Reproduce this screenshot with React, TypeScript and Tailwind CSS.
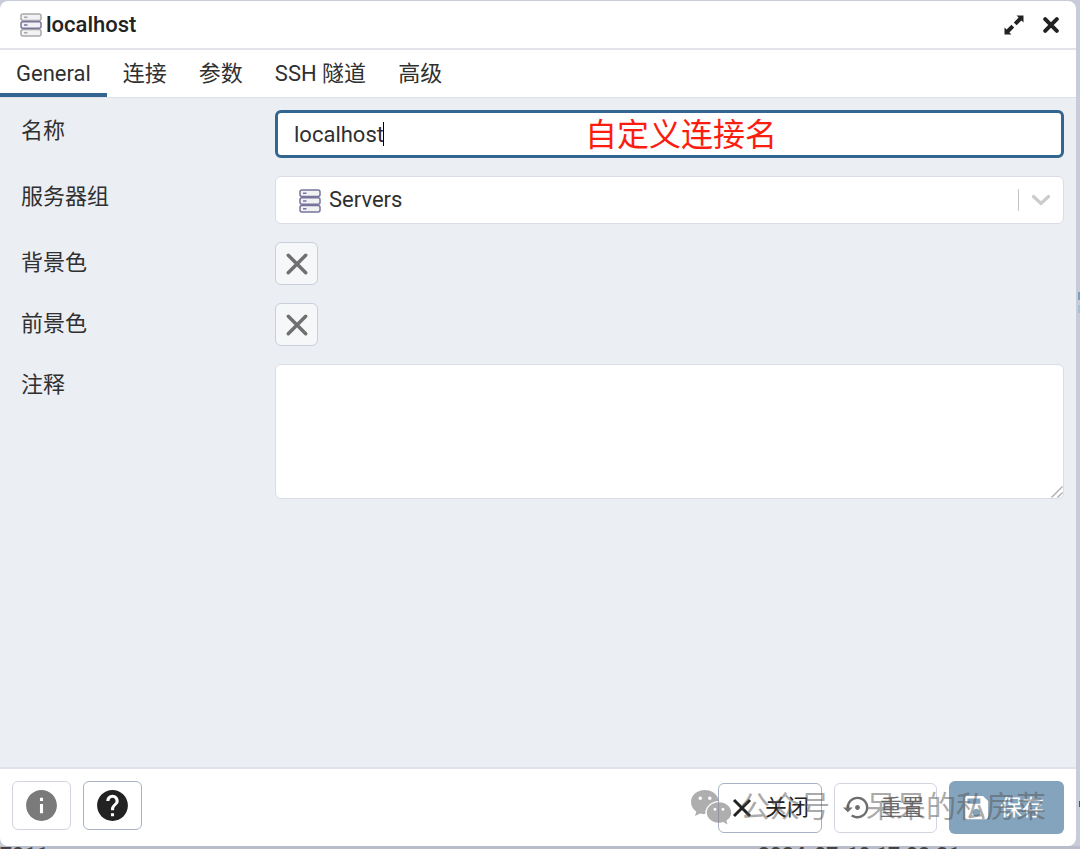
import { useState } from 'react';
import {
    MdHelp,
    MdInfo,
    MdSave,
    MdSettingsBackupRestore,
} from 'react-icons/md';

const tabs = ['General', '连接', '参数', 'SSH 隧道', '高级'];

const ServerIcon = ({ outer = '#76749b' }: { outer?: string }) => (
    <svg width="22" height="24" viewBox="0 0 22 24" fill="#f2f2f4" strokeWidth="1.5" aria-hidden="true">
        <rect x="1" y="1" width="20" height="6.6" rx="2" stroke={outer} />
        <rect x="1" y="16.4" width="20" height="6.6" rx="2" stroke={outer} />
        <rect x="1" y="8.7" width="20" height="6.6" rx="2" stroke="#76749b" />
        <path d="M4 4.3h3.5M4 19.7h3.5" stroke={outer} />
        <path d="M4 12h3.5" stroke="#76749b" />
    </svg>
);

const ExpandIcon = () => (
    <svg width="20" height="20" viewBox="0 0 20 20" fill="#222" aria-hidden="true">
        <path d="M12.5 0.5H19.5V7.5L17.4 5.4L12.6 10.2L9.8 7.4L14.6 2.6Z" />
        <path d="M7.5 19.5H0.5V12.5L2.6 14.6L7.4 9.8L10.2 12.6L5.4 17.4Z" />
    </svg>
);

const Cross = ({ size, width, cap = 'round' }: { size: number; width: number; cap?: 'round' | 'butt' }) => (
    <svg width={size} height={size} viewBox="0 0 22 22" fill="none" stroke="currentColor" strokeWidth={width} strokeLinecap={cap} aria-hidden="true">
        <path d="M3 3L19 19M19 3L3 19" />
    </svg>
);

const WechatIcon = () => (
    <svg width="42" height="36" viewBox="0 0 42 36" fill="#888" fillOpacity="0.68" fillRule="evenodd" aria-hidden="true">
        <path d="M15 1C7 1 1 6.3 1 13c0 3.9 2 7.3 5.3 9.5L5 27l5-2.6c1.7.5 3.4.7 5.2.7C15 17.8 21.2 12.1 29 12.1C27.8 5.5 22 1 15 1ZM10.3 7.5a1.8 1.8 0 1 1 0 3.6 1.8 1.8 0 0 1 0-3.6ZM19.8 7.5a1.8 1.8 0 1 1 0 3.6 1.8 1.8 0 0 1 0-3.6Z" />
        <path d="M29 13.2c-6.7 0-12.2 4.6-12.2 10.3S22.3 33.8 29 33.8c1.5 0 3-.2 4.3-.7l4.2 2.3-1.2-3.7c3-1.9 4.9-4.9 4.9-8.2 0-5.7-5.5-10.3-12.2-10.3ZM25 18.7a1.5 1.5 0 1 1 0 3 1.5 1.5 0 0 1 0-3ZM33 18.7a1.5 1.5 0 1 1 0 3 1.5 1.5 0 0 1 0-3Z" />
    </svg>
);

const Row = ({
    label,
    id,
    children,
}: {
    label: string;
    id: string;
    children: React.ReactNode;
}) => (
    <div className="flex items-start">
        <label htmlFor={id} className="h-[42px] w-[254px] shrink-0 leading-[42px]">{label}</label>
        <div className="relative flex min-w-0 flex-1">{children}</div>
    </div>
);

const ColorButton = ({ id }: { id: string }) => (
    <button id={id} type="button" className="flex h-[43px] w-[43px] items-center justify-center rounded-md border border-[#c8cedb] bg-[#f6f7f9] text-[#707070]">
        <Cross size={24} width={3.2} />
    </button>
);

const App = () => {
    const [active, setActive] = useState('General');
    const [name, setName] = useState('localhost');
    const [comment, setComment] = useState('');

    return (
        <div className="relative flex min-h-screen flex-col overflow-hidden bg-[#c8ccd8] pt-px text-[22px] text-[#303030] font-['Roboto','Noto_Sans_CJK_SC',sans-serif]">
            <div className="absolute right-0 top-[292px] h-2 w-[2px] bg-[#7f9dc4]" />
            <div className="absolute right-0 top-[305px] h-2 w-[2px] bg-[#a5bfdc]" />
            <div className="absolute right-0 top-[801px] h-[6px] w-px bg-[#555]" />

            <main className="mr-1 flex flex-1 flex-col overflow-hidden rounded-lg bg-white">
                <header className="flex h-[49px] items-center border-b-2 border-[#e2e4ea] pl-5 pr-[17px]">
                    <ServerIcon outer="#a9a9ad" />
                    <h1 className="ml-1 flex-1 font-medium leading-7 text-[#222]">localhost</h1>
                    <button type="button" aria-label="最大化" className="mr-[19px]">
                        <ExpandIcon />
                    </button>
                    <button type="button" aria-label="关闭对话框" className="text-[#222]">
                        <Cross size={16} width={5.4} />
                    </button>
                </header>

                <nav role="tablist" className="flex h-12 border-b border-[#dfe2e9]">
                    {tabs.map((tab) => (
                        <button
                            key={tab}
                            type="button"
                            role="tab"
                            aria-selected={tab === active}
                            onClick={() => setActive(tab)}
                            className={`border-b-4 px-4 pt-1 ${tab === active ? 'border-[#326690]' : 'border-transparent'}`}
                        >
                            {tab}
                        </button>
                    ))}
                </nav>

                <section className="flex flex-1 flex-col gap-[18px] bg-[#ebeef3] pb-4 pl-[21px] pr-3 pt-3">
                    <Row label="名称" id="name">
                        <input
                            id="name"
                            value={name}
                            onChange={(e) => setName(e.target.value)}
                            className="h-12 w-full rounded-md border-[3px] border-[#326690] bg-white px-4 outline-none"
                        />
                        <span className="absolute left-[108px] top-3 h-6 w-px bg-black" />
                        <span className="absolute left-[310px] top-0 text-[32px] leading-[50px] text-[#fb1e10]">自定义连接名</span>
                    </Row>
                    <Row label="服务器组" id="group">
                        <select id="group" className="h-12 w-full appearance-none rounded-md border border-[#d9dde5] bg-white pb-0.5 pl-[53px] pr-14 outline-none">
                            <option>Servers</option>
                        </select>
                        <span className="pointer-events-none absolute left-6 top-[13px]">
                            <ServerIcon />
                        </span>
                        <span className="pointer-events-none absolute right-[13px] top-[13px] flex h-[22px] items-center gap-3">
                            <span className="h-full w-px bg-[#c4c4c4]" />
                            <svg width="20" height="12" viewBox="0 0 20 12" fill="none" stroke="#ccc" strokeWidth="3.2" strokeLinecap="round" strokeLinejoin="round" aria-hidden="true">
                                <path d="M2.5 2.5L10 9.5L17.5 2.5" />
                            </svg>
                        </span>
                    </Row>
                    <Row label="背景色" id="background">
                        <ColorButton id="background" />
                    </Row>
                    <Row label="前景色" id="foreground">
                        <ColorButton id="foreground" />
                    </Row>
                    <Row label="注释" id="comment">
                        <textarea
                            id="comment"
                            value={comment}
                            onChange={(e) => setComment(e.target.value)}
                            className="h-[135px] w-full resize-none rounded-md border border-[#d9dde5] bg-white px-4 py-2 outline-none"
                        />
                        <svg className="absolute bottom-px right-px" width="12" height="12" viewBox="0 0 12 12" stroke="#aaa" strokeWidth="1.3" aria-hidden="true">
                            <path d="M0.5 11.5L11.5 0.5M6.5 11.5L11.5 6.5" />
                        </svg>
                    </Row>
                </section>

                <footer className="relative flex h-[79px] items-center gap-3 border-t-2 border-[#dfe2e9] px-3">
                    <button type="button" disabled aria-label="信息" className="mb-1 flex h-[49px] w-[59px] items-center justify-center rounded-md border border-[#d0d5df] text-[#7a7a7a]">
                        <MdInfo size={37} />
                    </button>
                    <button type="button" aria-label="帮助" className="mb-1 mr-auto flex h-[49px] w-[59px] items-center justify-center rounded-md border border-[#a8b1c5] text-[#222]">
                        <MdHelp size={37} />
                    </button>
                    <button type="button" className="flex h-[50px] items-center gap-3 rounded-md border border-[#a8b1c5] px-3 text-[#222]">
                        <Cross size={22} width={3} cap="butt" />
                        关闭
                    </button>
                    <button type="button" disabled className="flex h-[50px] items-center gap-2 rounded-md border border-[#d0d5df] pl-2 pr-3 text-[#6e6e6e]">
                        <MdSettingsBackupRestore size={29} />
                        重置
                    </button>
                    <button type="button" disabled className="flex h-[53px] items-center gap-2 rounded-md bg-[#84a3bc] pl-3 pr-5 text-white">
                        <MdSave size={31} />
                        保存
                    </button>
                    <div className="pointer-events-none absolute right-[30px] top-[17px] flex items-center text-[30px] leading-[42px] text-[#555]/50">
                        <WechatIcon />
                        <span className="ml-2">公众号</span>
                        <span className="w-9 text-center">·</span>
                        <span>呆呆的私房菜</span>
                    </div>
                </footer>
            </main>

            <div className="flex h-[3px] overflow-hidden bg-[#b9bdcb] text-[21px] font-bold leading-[18px] text-[#444]">
                <span className="flex-1">7011</span>
                <span className="mr-[120px]">2024-07-10 17:08:21</span>
            </div>
        </div>
    );
};

export default App;
